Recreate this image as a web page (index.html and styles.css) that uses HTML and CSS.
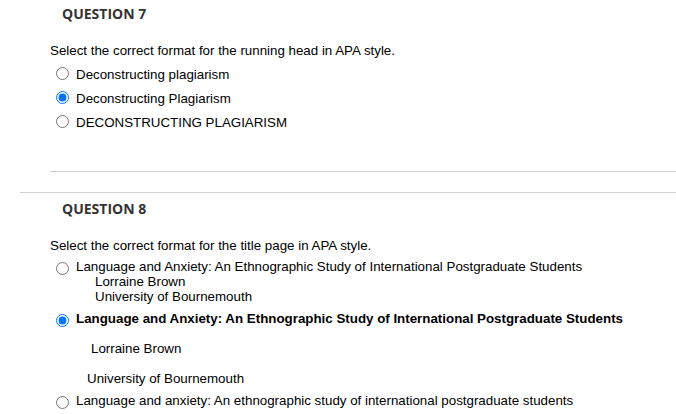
FILE: index.html
```html
<!DOCTYPE html>
<html lang="en">
<head>
    <meta charset="UTF-8">
    <title>Test Questions</title>
    <link rel="stylesheet" href="styles.css">
</head>
<body>
    <div class="page">
        <div class="question">
            <h3 class="q-title">QUESTION 7</h3>
            <div class="q-body">
                <p class="q-text">Select the correct format for the running head in APA style.</p>
                <div class="options">
                    <label class="option">
                        <input type="radio" name="q7">
                        <span class="opt-text">Deconstructing plagiarism</span>
                    </label>
                    <label class="option">
                        <input type="radio" name="q7" checked>
                        <span class="opt-text">Deconstructing Plagiarism</span>
                    </label>
                    <label class="option">
                        <input type="radio" name="q7">
                        <span class="opt-text">DECONSTRUCTING PLAGIARISM</span>
                    </label>
                </div>
                <hr class="q-sep">
            </div>
        </div>

        <hr class="block-sep">

        <div class="question question-multi">
            <h3 class="q-title">QUESTION 8</h3>
            <div class="q-body">
                <p class="q-text">Select the correct format for the title page in APA style.</p>
                <div class="options">
                    <label class="option">
                        <input type="radio" name="q8">
                        <span class="opt-text">
                            Language and Anxiety: An Ethnographic Study of International Postgraduate Students
                            <span class="sub-line indent-a">Lorraine Brown</span>
                            <span class="sub-line indent-a">University of Bournemouth</span>
                        </span>
                    </label>
                    <label class="option">
                        <input type="radio" name="q8" checked>
                        <span class="opt-text">
                            <strong>Language and Anxiety: An Ethnographic Study of International Postgraduate Students</strong>
                            <span class="sub-line spaced indent-b">Lorraine Brown</span>
                            <span class="sub-line spaced indent-c">University of Bournemouth</span>
                        </span>
                    </label>
                    <label class="option">
                        <input type="radio" name="q8">
                        <span class="opt-text">Language and anxiety: An ethnographic study of international postgraduate students</span>
                    </label>
                </div>
            </div>
        </div>
    </div>
</body>
</html>
```

FILE: styles.css
```css
body {
    margin: 0;
    background-color: #fff;
    font-family: "Liberation Sans", Arial, sans-serif;
    font-size: 10pt;
    color: #000;
}
.page {
    padding-left: 20px;
}
.question {
    padding-top: 4px;
}
.q-title {
    margin: 0 0 0 42px;
    font-family: "Open Sans", sans-serif;
    font-size: 14px;
    font-weight: 700;
    line-height: 20px;
    color: #333;
}
.q-body {
    margin-left: 30px;
}
.q-text {
    margin: 19px 0 0 0;
    line-height: 15px;
}
.options {
    display: flex;
    flex-direction: column;
    gap: 9px;
    margin-top: 9px;
    padding-left: 6px;
}
.option {
    display: flex;
    align-items: flex-start;
    line-height: 15px;
}
.option input {
    flex: none;
    width: 13px;
    height: 13px;
    margin: 0 7px 0 0;
}
.opt-text strong {
    font-weight: 700;
}
.sub-line {
    display: block;
}
.sub-line.spaced {
    margin-top: 15px;
}
.indent-a {
    padding-left: 19px;
}
.indent-b {
    padding-left: 15px;
}
.indent-c {
    padding-left: 11px;
}
.q-sep, .block-sep {
    height: 0;
    border: none;
    border-top: 1px solid #cfcfcf;
    margin: 0;
}
.q-sep {
    margin-top: 41px;
}
.block-sep {
    margin-top: 20px;
    margin-bottom: 2px;
}
.question-multi .options {
    gap: 7px;
    margin-top: 6px;
}
.question-multi .option input {
    margin-top: 3px;
}
```
